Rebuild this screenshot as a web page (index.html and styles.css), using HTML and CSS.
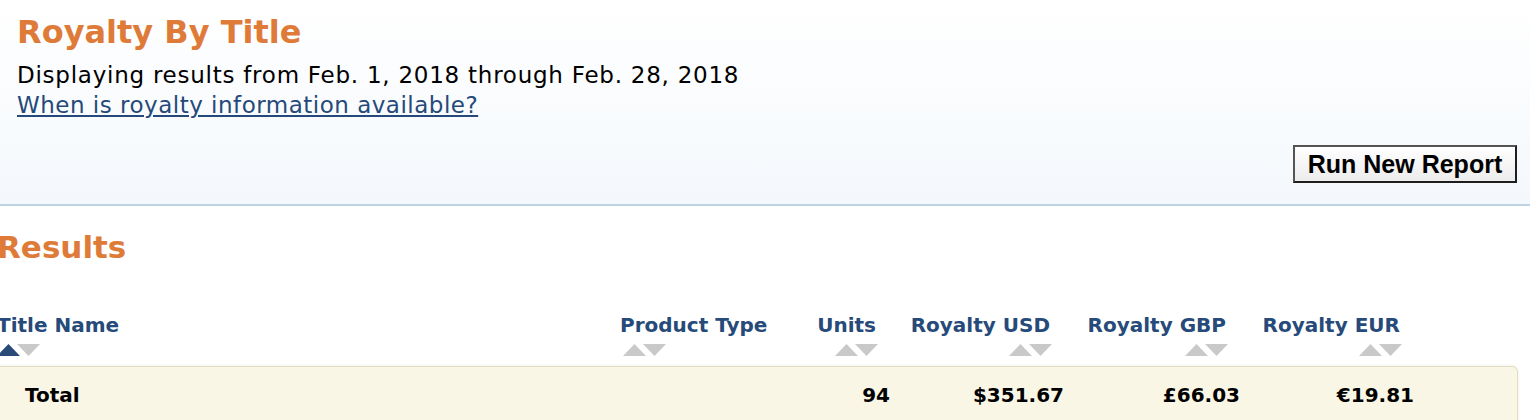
FILE: index.html
```html
<!DOCTYPE html>
<html lang="en">
<head>
<meta charset="utf-8">
<title>Royalty By Title</title>
<link rel="stylesheet" href="styles.css">
</head>
<body>
<div class="report-header">
  <h1 class="page-title">Royalty By Title</h1>
  <p class="range">Displaying results from Feb. 1, 2018 through Feb. 28, 2018</p>
  <a class="help-link" href="#">When is royalty information available?</a>
  <div class="actions">
    <button class="run-btn" type="button">Run New Report</button>
  </div>
</div>
<div class="results">
  <h2 class="results-title">Results</h2>
  <div class="grid head-row">
    <div class="hcell left first">
      <span class="hlabel">Title Name</span>
      <svg class="sort" width="43" height="12" viewBox="0 0 43 12"><polygon points="0,12 11.5,0 23,12" fill="#2a4a78"/><polygon points="20,0 43,0 31.5,12" fill="#c9c9c9"/></svg>
    </div>
    <div class="hcell left second">
      <span class="hlabel">Product Type</span>
      <svg class="sort shift" width="43" height="12" viewBox="0 0 43 12"><polygon points="0,12 11.5,0 23,12" fill="#c9c9c9"/><polygon points="20,0 43,0 31.5,12" fill="#c9c9c9"/></svg>
    </div>
    <div class="hcell right">
      <span class="hlabel">Units</span>
      <svg class="sort" width="43" height="12" viewBox="0 0 43 12"><polygon points="0,12 11.5,0 23,12" fill="#c9c9c9"/><polygon points="20,0 43,0 31.5,12" fill="#c9c9c9"/></svg>
    </div>
    <div class="hcell right">
      <span class="hlabel">Royalty USD</span>
      <svg class="sort" width="43" height="12" viewBox="0 0 43 12"><polygon points="0,12 11.5,0 23,12" fill="#c9c9c9"/><polygon points="20,0 43,0 31.5,12" fill="#c9c9c9"/></svg>
    </div>
    <div class="hcell right">
      <span class="hlabel">Royalty GBP</span>
      <svg class="sort" width="43" height="12" viewBox="0 0 43 12"><polygon points="0,12 11.5,0 23,12" fill="#c9c9c9"/><polygon points="20,0 43,0 31.5,12" fill="#c9c9c9"/></svg>
    </div>
    <div class="hcell right">
      <span class="hlabel">Royalty EUR</span>
      <svg class="sort" width="43" height="12" viewBox="0 0 43 12"><polygon points="0,12 11.5,0 23,12" fill="#c9c9c9"/><polygon points="20,0 43,0 31.5,12" fill="#c9c9c9"/></svg>
    </div>
  </div>
  <div class="total-row">
    <div class="grid">
      <div class="tcell total-label">Total</div>
      <div class="tcell"></div>
      <div class="tcell num">94</div>
      <div class="tcell num">$351.67</div>
      <div class="tcell num">£66.03</div>
      <div class="tcell num">€19.81</div>
    </div>
  </div>
</div>
</body>
</html>
```
FILE: styles.css
```css
html, body {
  margin: 0;
  padding: 0;
  background: #ffffff;
  font-family: "DejaVu Sans", Verdana, sans-serif;
  color: #000;
  overflow: hidden;
}

.report-header {
  background: linear-gradient(to bottom, #ffffff 0%, #f4f8fc 100%);
  border-bottom: 2px solid #bdd3e0;
  padding: 14px 13px 21px 17px;
}

.page-title {
  margin: 0;
  font-size: 32px;
  line-height: 36px;
  font-weight: bold;
  color: #df7b39;
}

.range {
  margin: 10px 0 0 0;
  font-size: 23px;
  line-height: 30px;
  letter-spacing: 0.75px;
}

.help-link {
  display: inline-block;
  font-size: 23px;
  line-height: 30px;
  letter-spacing: 0.5px;
  color: #25497a;
  text-decoration: underline;
}

.actions {
  display: flex;
  justify-content: flex-end;
  margin-top: 25px;
}

.run-btn {
  width: 224px;
  height: 38px;
  box-sizing: border-box;
  border: 2px solid #1e1e1e;
  border-top-color: #555;
  border-left-color: #555;
  background: linear-gradient(to bottom, #ffffff 0%, #ececec 100%);
  font-family: "Liberation Sans", Arial, sans-serif;
  font-weight: bold;
  font-size: 25px;
  line-height: 34px;
  padding: 0;
  color: #000;
  text-align: center;
}

.results {
  margin-left: -3px;
}

.results-title {
  margin: 22px 0 0 0;
  font-size: 31px;
  line-height: 38px;
  font-weight: bold;
  color: #df7b39;
}

.grid {
  display: grid;
  grid-template-columns: 623px 180px 78px 174px 176px 174px;
}

.head-row {
  margin-top: 47px;
}

.hcell {
  display: flex;
  flex-direction: column;
}

.hcell.left {
  align-items: flex-start;
}

.hcell.right {
  align-items: flex-end;
}

.hlabel {
  font-size: 20px;
  line-height: 24px;
  font-weight: bold;
  color: #264a79;
  white-space: nowrap;
}

.hcell.right .hlabel {
  padding-right: 2px;
}

.sort {
  display: block;
  margin-top: 7px;
}

.sort.shift {
  margin-left: 3px;
}

.total-row {
  margin: 10px 12px 0 -10px;
  padding: 16px 0 30px 21px;
  background: #f9f6e5;
  border: 1px solid #e2dec4;
  border-radius: 6px;
  box-shadow: 0 0 2px rgba(150, 140, 100, 0.25);
}

.tcell {
  font-size: 20px;
  line-height: 24px;
  font-weight: bold;
  white-space: nowrap;
}

.total-label {
  padding-left: 16px;
}

.num {
  text-align: right;
}
```
